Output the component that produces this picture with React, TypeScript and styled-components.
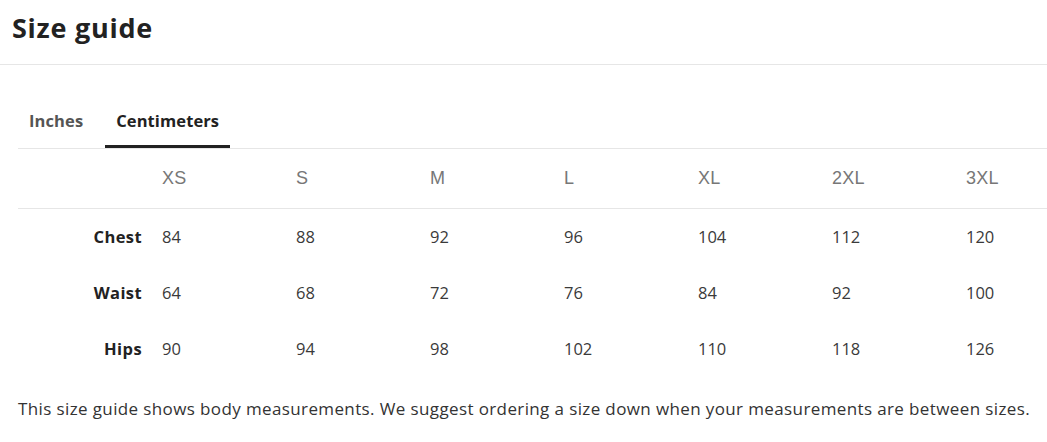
import React, { useState } from 'react';
import styled, { createGlobalStyle } from 'styled-components';

const GlobalStyle = createGlobalStyle`
  html, body {
    margin: 0;
    padding: 0;
    background: #ffffff;
    overflow: hidden;
  }

  body {
    font-family: "Open Sans", Lato, sans-serif;
    color: #222222;
  }
`;

const Page = styled.div`
  width: 1047px;
  height: 442px;
  overflow: hidden;
`;

const Header = styled.header`
  height: 65px;
  border-bottom: 1px solid #e6e6e6;
  padding: 0 12px;
  display: flex;
  align-items: center;
  box-sizing: border-box;

  h1 {
    margin: 0 0 10px;
    font-size: 27px;
    font-weight: 700;
    letter-spacing: 0.75px;
    color: #222222;
  }
`;

const Body = styled.div`
  padding: 0 0 0 18px;
`;

const TabList = styled.div`
  margin-top: 27px;
  height: 56px;
  display: flex;
  align-items: stretch;
  gap: 11px;
  border-bottom: 1px solid #e6e6e6;
`;

const Tab = styled.button<{ $active: boolean }>`
  all: unset;
  cursor: pointer;
  padding: 3px 11px 0;
  display: flex;
  align-items: center;
  font-family: "Open Sans", Lato, sans-serif;
  font-size: 16.5px;
  font-weight: 700;
  letter-spacing: 0.1px;
  color: ${({ $active }) => ($active ? '#222222' : '#555555')};
  border-bottom: 3px solid ${({ $active }) => ($active ? '#222222' : 'transparent')};
`;

const Table = styled.table`
  border-collapse: collapse;
  table-layout: fixed;
  width: 1072px;

  th,
  td {
    box-sizing: border-box;
    width: 134px;
    padding: 0 10px;
    text-align: left;
    white-space: nowrap;
  }

  thead tr {
    height: 59px;
    border-bottom: 1px solid #e6e6e6;
  }

  tbody tr {
    height: 56px;
  }
`;

const SizeCell = styled.th`
  font-family: "Liberation Sans", Arial, sans-serif;
  font-size: 18px;
  font-weight: 400;
  color: #777777;
  letter-spacing: 0.3px;
`;

const LabelCell = styled.th`
  && {
    text-align: right;
  }
  font-size: 16.5px;
  font-weight: 700;
  letter-spacing: 0.4px;
  color: #222222;
`;

const ValueCell = styled.td`
  font-size: 16.5px;
  font-weight: 400;
  color: #3a3a3a;
`;

const Note = styled.p`
  margin: 21px 0 0;
  font-size: 17px;
  letter-spacing: 0.38px;
  color: #333333;
  white-space: nowrap;
`;

const sizes = ['XS', 'S', 'M', 'L', 'XL', '2XL', '3XL'];

const measurements: { label: string; cm: number[]; inch: number[] }[] = [
  { label: 'Chest', cm: [84, 88, 92, 96, 104, 112, 120], inch: [33, 35, 36, 38, 41, 44, 47] },
  { label: 'Waist', cm: [64, 68, 72, 76, 84, 92, 100], inch: [25, 27, 28, 30, 33, 36, 39] },
  { label: 'Hips', cm: [90, 94, 98, 102, 110, 118, 126], inch: [35, 37, 39, 40, 43, 46, 50] },
];

const App: React.FC = () => {
  const [unit, setUnit] = useState<'inch' | 'cm'>('cm');

  return (
    <Page>
      <GlobalStyle />
      <Header>
        <h1>Size guide</h1>
      </Header>
      <Body>
        <TabList>
          <Tab $active={unit === 'inch'} onClick={() => setUnit('inch')}>
            Inches
          </Tab>
          <Tab $active={unit === 'cm'} onClick={() => setUnit('cm')}>
            Centimeters
          </Tab>
        </TabList>
        <Table>
          <thead>
            <tr>
              <th />
              {sizes.map((size) => (
                <SizeCell key={size}>{size}</SizeCell>
              ))}
            </tr>
          </thead>
          <tbody>
            {measurements.map((row) => (
              <tr key={row.label}>
                <LabelCell>{row.label}</LabelCell>
                {row[unit].map((value, i) => (
                  <ValueCell key={i}>{value}</ValueCell>
                ))}
              </tr>
            ))}
          </tbody>
        </Table>
        <Note>
          This size guide shows body measurements. We suggest ordering a size down when your
          measurements are between sizes.
        </Note>
      </Body>
    </Page>
  );
};

export default App;
